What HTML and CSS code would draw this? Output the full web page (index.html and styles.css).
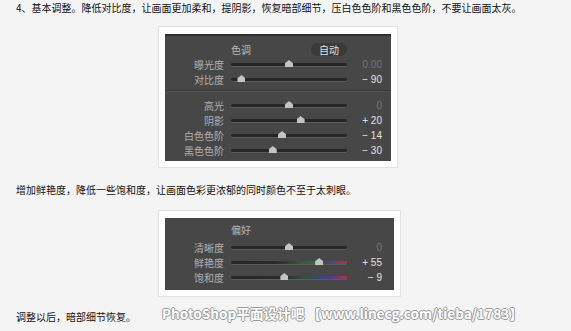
FILE: index.html
```html
<html>

<head>
  <link rel="stylesheet" href="styles.css">
</head>

<body>
  <p class="line">4、基本调整。降低对比度，让画面更加柔和，提阴影，恢复暗部细节，压白色色阶和黑色色阶，不要让画面太灰。</p>

  <div class="shot">
    <div class="panel panel-tone">
      <div class="head">
        <span></span>
        <div class="head-main"><span class="title">色调</span><span class="auto">自动</span></div>
      </div>
      <div class="row"><span class="label">曝光度</span><div class="track"><i class="thumb" style="left: 50%"></i></div><span class="value dim">0.00</span></div>
      <div class="row"><span class="label">对比度</span><div class="track"><i class="thumb" style="left: 9%"></i></div><span class="value">− 90</span></div>
      <div class="sep"></div>
      <div class="row"><span class="label">高光</span><div class="track"><i class="thumb" style="left: 50%"></i></div><span class="value dim">0</span></div>
      <div class="row"><span class="label">阴影</span><div class="track"><i class="thumb" style="left: 60%"></i></div><span class="value">+ 20</span></div>
      <div class="row"><span class="label">白色色阶</span><div class="track"><i class="thumb" style="left: 44%"></i></div><span class="value">− 14</span></div>
      <div class="row"><span class="label">黑色色阶</span><div class="track"><i class="thumb" style="left: 36%"></i></div><span class="value">− 30</span></div>
    </div>
  </div>

  <p class="line line-mid">增加鲜艳度，降低一些饱和度，让画面色彩更浓郁的同时颜色不至于太刺眼。</p>

  <div class="shot shot-pref">
    <div class="panel panel-pref">
      <div class="head">
        <span></span>
        <div class="head-main"><span class="title">偏好</span></div>
      </div>
      <div class="row"><span class="label">清晰度</span><div class="track"><i class="thumb" style="left: 50%"></i></div><span class="value dim">0</span></div>
      <div class="row"><span class="label">鲜艳度</span><div class="track track-vib"><i class="thumb" style="left: 76%"></i></div><span class="value">+ 55</span></div>
      <div class="row"><span class="label">饱和度</span><div class="track track-sat"><i class="thumb" style="left: 46%"></i></div><span class="value">− 9</span></div>
    </div>
  </div>

  <p class="line line-end">调整以后，暗部细节恢复。</p>

  <div class="mark">PhotoShop平面设计吧 【www.linecg.com/tieba/1783】</div>
</body>

</html>
```

FILE: styles.css
```css
body {
  margin: 0;
  position: relative;
  background: #f4f4f4;
  color: #111;
  font-family: "Noto Sans CJK SC", sans-serif;
  font-size: 10px;
}

.line {
  margin: 0;
  padding-left: 16px;
  line-height: 16px;
}

.line-mid {
  margin-top: 14px;
}

.line-end {
  margin-top: 12px;
}

/* 白底截图框 */
.shot {
  width: 240px;
  box-sizing: border-box;
  margin-top: 10px;
  margin-left: 158px;
  padding: 7px 6px 6px;
  background: #fff;
  border: 1px solid #e3e3e3;
}

.shot-pref {
  width: 243px;
  margin-top: 12px;
}

/* 深色面板 */
.panel {
  background: #474747;
  color: #b0b0b0;
}

.panel-tone {
  border-top: 2px solid #2e2e2e;
  padding-bottom: 3px;
}

.panel-pref {
  padding-top: 5px;
  padding-bottom: 5px;
}

.head,
.row {
  display: grid;
  grid-template-columns: 59px 116px 28px;
  column-gap: 7px;
  align-items: center;
}

.head {
  height: 13px;
  margin-bottom: 1px;
}

.panel-tone .head {
  padding-top: 7px;
}

.panel-pref .head {
  margin-bottom: 4px;
}

.head-main {
  display: flex;
  justify-content: space-between;
  align-items: center;
}

.title {
  color: #b8b8b8;
  line-height: 13px;
}

.auto {
  width: 36px;
  height: 13px;
  line-height: 13px;
  text-align: center;
  border-radius: 7px;
  background: #3a3a3a;
  color: #e2e2e2;
}

.row {
  height: 15px;
}

.label {
  text-align: right;
  line-height: 15px;
}

.track {
  position: relative;
  height: 3px;
  border-radius: 2px;
  background: #262626;
  box-shadow: 0 1px 0 #5c5c5c;
}

.track-vib {
  background: linear-gradient(to right, #262626 0%, #2c2c2c 40%, #3b5a2c 60%, #2f6a47 72%, #47467a 84%, #7a3a70 92%, #a8344c 100%);
}

.track-sat {
  background: linear-gradient(to right, #262626 0%, #2c2c2c 45%, #34503a 62%, #324a78 76%, #5a3c80 88%, #a8344c 100%);
}

.thumb {
  position: absolute;
  top: -3px;
  width: 8px;
  height: 7px;
  margin-left: -4px;
  background: #c4c4c4;
  clip-path: polygon(50% 0, 100% 45%, 100% 100%, 0 100%, 0 45%);
}

.value {
  text-align: right;
  color: #e4e4e4;
  font-family: "Liberation Sans", sans-serif;
  font-size: 10px;
}

.value.dim {
  color: #767676;
}

.sep {
  height: 1px;
  margin: 3px 0 6px;
  background: #363636;
  border-bottom: 1px solid #555;
}

/* 水印 */
.mark {
  position: absolute;
  left: 162px;
  top: 304px;
  color: #fff;
  font-family: "Noto Sans CJK SC", sans-serif;
  font-weight: bold;
  font-size: 13.6px;
  line-height: 18px;
  white-space: nowrap;
  text-shadow: 1px 0 0 #9a9a9a, -1px 0 0 #9a9a9a, 0 1px 0 #9a9a9a, 0 -1px 0 #9a9a9a;
}
```
